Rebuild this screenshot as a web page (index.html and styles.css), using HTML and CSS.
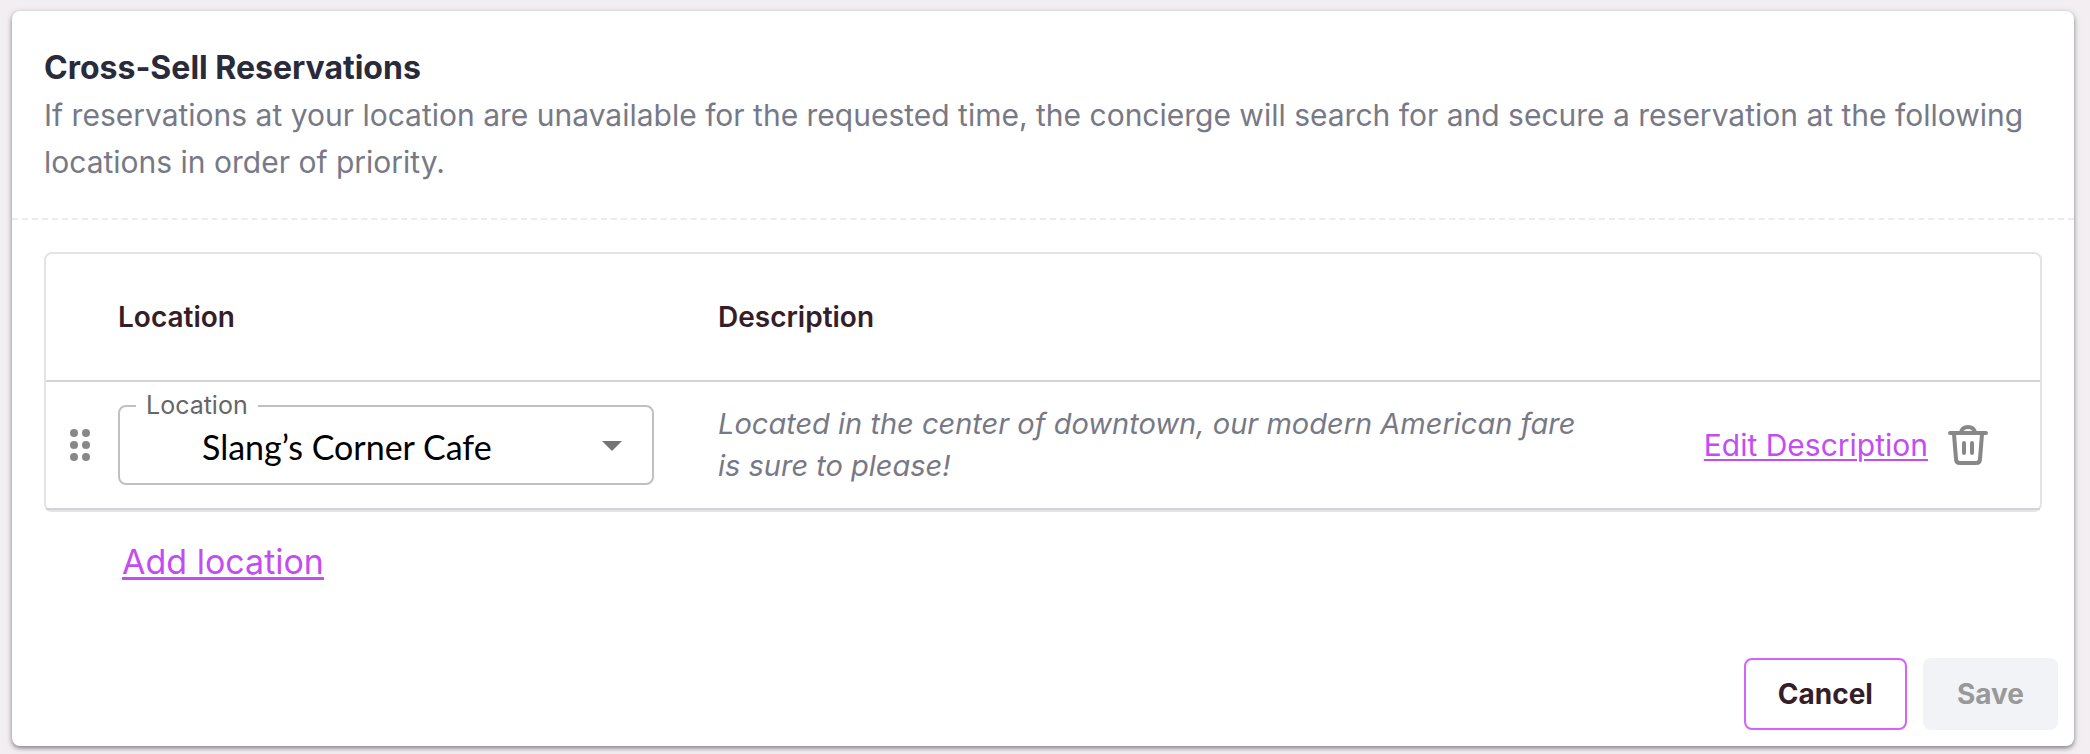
FILE: index.html
```html
<!DOCTYPE html>
<html lang="en">

<head>
    <meta charset="utf-8">
    <title>Cross-Sell Reservations</title>
    <link rel="stylesheet" href="styles.css">
</head>

<body>
    <form class="card">
        <header class="card-header">
            <h1>Cross-Sell Reservations</h1>
            <p>If reservations at your location are unavailable for the requested time, the concierge will search for and secure a reservation at the following locations in order of priority.</p>
        </header>
        <div class="card-body">
            <div class="table-frame">
                <table class="locations">
                    <colgroup>
                        <col class="col-drag">
                        <col class="col-location">
                        <col class="col-description">
                        <col class="col-actions">
                    </colgroup>
                    <thead>
                        <tr>
                            <th></th>
                            <th scope="col">Location</th>
                            <th scope="col">Description</th>
                            <th></th>
                        </tr>
                    </thead>
                    <tbody>
                        <tr>
                            <td class="drag">
                                <button type="button" class="icon-button" aria-label="Reorder">
                                    <svg width="20" height="32" viewBox="0 0 20 32" fill="#888">
                                        <circle cx="4" cy="4" r="4" />
                                        <circle cx="16" cy="4" r="4" />
                                        <circle cx="4" cy="16" r="4" />
                                        <circle cx="16" cy="16" r="4" />
                                        <circle cx="4" cy="28" r="4" />
                                        <circle cx="16" cy="28" r="4" />
                                    </svg>
                                </button>
                            </td>
                            <td class="location">
                                <div class="field">
                                    <label for="location">Location</label>
                                    <select id="location">
                                        <option>Slang’s Corner Cafe</option>
                                    </select>
                                    <svg class="arrow" width="20" height="10" viewBox="0 0 20 10" fill="#757575">
                                        <path d="M0 0h20L10 10z" />
                                    </svg>
                                </div>
                            </td>
                            <td class="description">Located in the center of downtown, our modern American fare is sure to please!</td>
                            <td>
                                <div class="actions">
                                    <a href="#edit">Edit Description</a>
                                    <button type="button" class="icon-button" aria-label="Delete location">
                                        <svg width="40" height="40" viewBox="0 0 40 40" fill="none" stroke="#888" stroke-width="4" stroke-linecap="round" stroke-linejoin="round">
                                            <path d="M2 8h36" />
                                            <path d="M13 7c1-3 4-5 7-5s6 2 7 5" />
                                            <path d="M6 9l2 25q0 4 4 4h16q4 0 4-4l2-25" />
                                            <path d="M16 18v10M24 18v10" />
                                        </svg>
                                    </button>
                                </div>
                            </td>
                        </tr>
                    </tbody>
                </table>
            </div>
            <a href="#add" class="add">Add location</a>
        </div>
        <footer class="card-footer">
            <button type="button" class="btn btn-cancel">Cancel</button>
            <button type="submit" class="btn btn-save" disabled>Save</button>
        </footer>
    </form>
</body>

</html>
```
FILE: styles.css
```css
* {
    box-sizing: border-box;
}

body {
    margin: 0;
    padding: 11px 16px 8px 12px;
    background-color: #f3eef2;
    color: #777986;
    font-family: Inter, "Liberation Sans", sans-serif;
    font-size: 30px;
}

a {
    color: #c44df2;
    text-underline-offset: 3px;
    text-decoration-thickness: 2px;
}

button,
select {
    font: inherit;
}

.card {
    background-color: #fff;
    border-radius: 8px;
    box-shadow: 0 2px 4px rgba(0, 0, 0, 0.4), 0 2px 8px rgba(0, 0, 0, 0.12);
}

.card-header {
    padding: 32px;
    border-bottom: 2px dashed #ececee;
}

.card-header h1 {
    margin: 0;
    color: #292a3a;
    font-size: 32px;
    font-weight: 700;
    line-height: 49px;
}

.card-header p {
    margin: 0;
    line-height: 47px;
}

.card-body {
    padding: 32px;
}

.table-frame {
    border: 2px solid #e4e4e6;
    border-radius: 8px;
}

.locations {
    width: 100%;
    table-layout: fixed;
    border-spacing: 0;
}

.col-drag {
    width: 72px;
}

.col-location {
    width: 600px;
}

.col-actions {
    width: 420px;
}

.locations th,
.locations td {
    height: 128px;
    padding: 0;
    border-bottom: 2px solid #d3d3d9;
    text-align: left;
}

.locations th {
    color: #351e28;
    font-size: 28px;
    font-weight: 600;
}

.locations .drag {
    padding-left: 24px;
}

.locations .location {
    padding-right: 64px;
}

.locations .description {
    padding-right: 32px;
    font-size: 29px;
    font-style: italic;
    line-height: 42px;
}

.icon-button {
    display: block;
    padding: 0;
    border: 0;
    background: none;
    cursor: pointer;
}

.icon-button svg {
    display: block;
}

.field {
    position: relative;
}

.field label {
    position: absolute;
    top: -14px;
    left: 18px;
    padding: 0 10px;
    background-color: #fff;
    color: #666;
    font-size: 25px;
    line-height: 28px;
}

.field select {
    display: block;
    width: 100%;
    height: 80px;
    padding: 2px 80px 0 82px;
    appearance: none;
    border: 2px solid #c0c0c2;
    border-radius: 8px;
    background-color: #fff;
    color: #000;
    font-family: Lato, sans-serif;
    font-size: 34px;
}

.field .arrow {
    position: absolute;
    top: 36px;
    right: 32px;
    pointer-events: none;
}

.actions {
    display: flex;
    justify-content: flex-end;
    align-items: center;
    gap: 20px;
    padding-right: 52px;
}

.add {
    display: block;
    width: fit-content;
    margin: 30px 0 0 78px;
    font-size: 34px;
    line-height: 40px;
    text-decoration-thickness: 3px;
}

.card-footer {
    display: flex;
    justify-content: flex-end;
    gap: 16px;
    padding: 44px 16px 16px;
}

.btn {
    height: 72px;
    padding: 0 32px;
    border: 2px solid #d562fa;
    border-radius: 8px;
    background-color: #fff;
    color: #351e28;
    font-size: 28px;
    font-weight: 700;
}

.btn-save {
    border-color: #f2f3f7;
    background-color: #f2f3f7;
    color: #999;
}
```
